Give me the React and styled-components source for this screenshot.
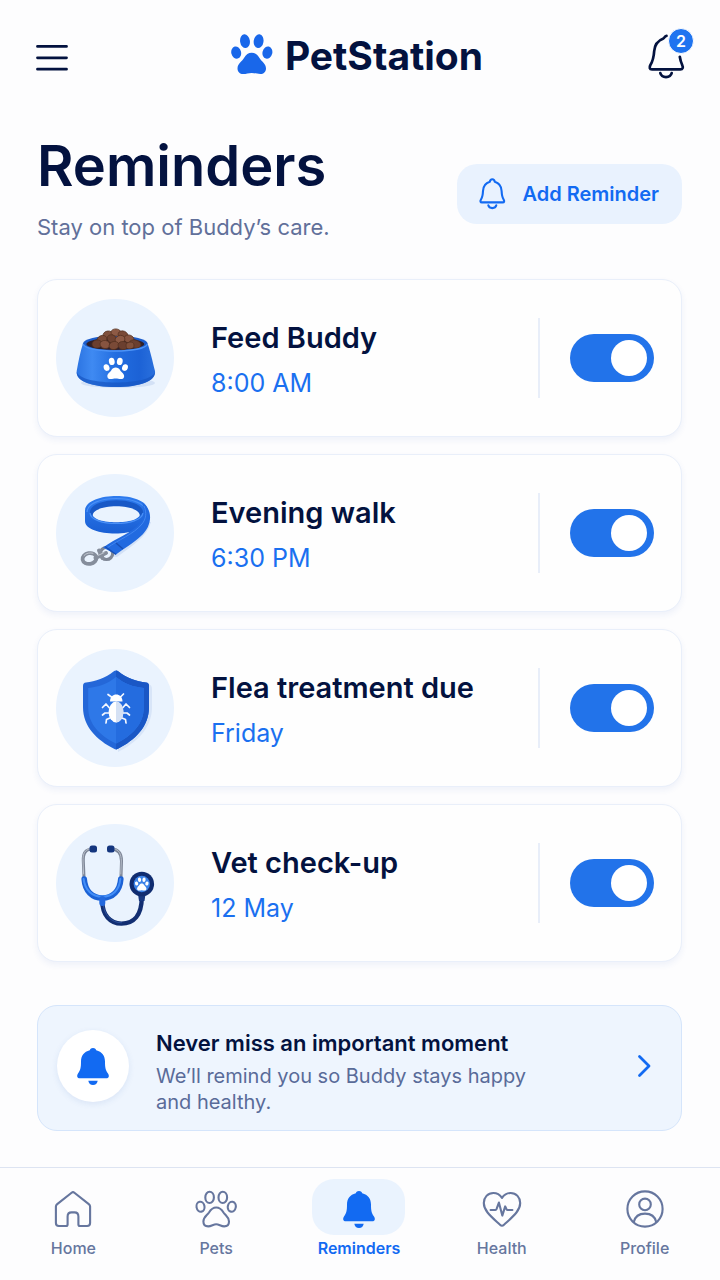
import React, { useState } from "react";
import styled, { createGlobalStyle } from "styled-components";

const GlobalStyle = createGlobalStyle`
  * {
    box-sizing: border-box;
  }
  body {
    margin: 0;
    background: #fdfdfe;
    color: #03123f;
    font-family: Inter, "Liberation Sans", sans-serif;
  }
  button {
    font: inherit;
    border: 0;
    padding: 0;
    background: none;
    cursor: pointer;
  }
  h1, h2, p, ul {
    margin: 0;
    padding: 0;
  }
  svg {
    display: block;
    flex: none;
  }
`;

const Page = styled.div`
  display: flex;
  flex-direction: column;
  min-height: 100vh;
`;

const Topbar = styled.header`
  display: flex;
  align-items: center;
  justify-content: space-between;
  height: 112px;
  padding: 0 24px 0 36px;
`;

const IconButton = styled.button`
  position: relative;
  display: flex;
`;

const Badge = styled.span`
  position: absolute;
  top: 0;
  right: 2px;
  width: 26px;
  height: 26px;
  border-radius: 50%;
  border: 1px solid #fdfdfe;
  background: #1f74f0;
  color: #fff;
  font-size: 16px;
  font-weight: 600;
  line-height: 24px;
  text-align: center;
`;

const Logo = styled.a`
  display: flex;
  align-items: center;
  gap: 12px;
  color: #03123f;
  font-size: 39px;
  font-weight: 700;
  line-height: 48px;
  text-decoration: none;

  svg {
    margin-bottom: 4px;
  }
`;

const Main = styled.main`
  padding: 22px 38px 36px 37px;
`;

const TitleRow = styled.div`
  display: flex;
  align-items: flex-start;
  justify-content: space-between;
  margin-bottom: 37px;
`;

const Title = styled.h1`
  font-size: 56px;
  font-weight: 600;
  line-height: 64px;
`;

const Subtitle = styled.p`
  margin-top: 14px;
  color: #61709a;
  font-size: 22px;
  line-height: 30px;
`;

const AddButton = styled.button`
  display: flex;
  align-items: center;
  gap: 16px;
  height: 60px;
  margin-top: 30px;
  && {
    padding: 0 23px 0 22px;
    background: #e9f2fe;
  }
  border-radius: 20px;
  color: #126af2;
  font-size: 20px;
  font-weight: 600;
  white-space: nowrap;
`;

const List = styled.ul`
  display: flex;
  flex-direction: column;
  gap: 17px;
  list-style: none;
`;

const Card = styled.li`
  display: flex;
  align-items: center;
  height: 158px;
  padding: 0 27px 0 18px;
  border: 1px solid #e9effa;
  border-radius: 20px;
  background: #fefefe;
  box-shadow: 0 3px 6px rgba(40, 90, 180, 0.07);
`;

const Picture = styled.div`
  width: 118px;
  height: 118px;
  margin-right: 37px;
  border-radius: 50%;
  background: #eaf3fe;
`;

const CardText = styled.label`
  flex: 1;
  padding-top: 5px;
  cursor: pointer;
`;

const CardTitle = styled.span`
  display: block;
  font-size: 29px;
  font-weight: 600;
  line-height: 40px;
`;

const CardTime = styled.span`
  display: block;
  margin-top: 5px;
  color: #1a70f0;
  font-size: 25px;
  line-height: 40px;
`;

const SwitchBox = styled.div`
  display: flex;
  align-items: center;
  height: 80px;
  padding-left: 30px;
  border-left: 2px solid #e8eef9;
`;

const Switch = styled.input`
  appearance: none;
  width: 84px;
  height: 48px;
  margin: 0;
  padding: 6px;
  border-radius: 24px;
  background: ${(props) => (props.checked ? "#2273ea" : "#c5cfe2")};
  cursor: pointer;

  &::before {
    content: "";
    display: block;
    width: 36px;
    height: 36px;
    margin-left: ${(props) => (props.checked ? "35px" : "0")};
    border-radius: 50%;
    background: #fff;
  }
`;

const Banner = styled.button`
  display: flex;
  align-items: center;
  width: 100%;
  margin-top: 43px;
  && {
    padding: 24px 30px 15px 19px;
    border: 1px solid #d5e5fb;
    background: #eef5fe;
  }
  border-radius: 20px;
  text-align: left;
`;

const BannerIcon = styled.span`
  display: flex;
  align-items: center;
  justify-content: center;
  width: 72px;
  height: 72px;
  margin: 0 27px 13px 0;
  border-radius: 50%;
  background: #fff;
  box-shadow: 0 2px 6px rgba(40, 90, 180, 0.1);
`;

const BannerText = styled.span`
  flex: 1;
  color: #596b99;
  font-size: 20px;
  line-height: 26px;
`;

const BannerTitle = styled.strong`
  display: block;
  margin-bottom: 7px;
  color: #03123f;
  font-size: 22px;
  font-weight: 600;
`;

const BannerCopy = styled.span`
  display: block;
  max-width: 380px;
`;

const BannerArrow = styled.span`
  margin-bottom: 14px;
`;

const Nav = styled.nav`
  display: grid;
  grid-template-columns: repeat(5, 1fr);
  height: 113px;
  margin-top: auto;
  padding: 11px 4px 0 2px;
  border-top: 1px solid #dde4f2;
`;

const NavItem = styled.a`
  display: flex;
  flex-direction: column;
  align-items: center;
  gap: 3px;
  color: ${(props) => (props.$active ? "#126af2" : "#66769e")};
  font-size: 16px;
  font-weight: ${(props) => (props.$active ? 600 : 500)};
  line-height: 20px;
  text-decoration: none;
`;

const NavIcon = styled.span`
  display: flex;
  align-items: center;
  justify-content: center;
  width: 93px;
  height: 56px;
  padding-top: 4px;
  border-radius: 22px;
  background: ${(props) => (props.$active ? "#eaf3fe" : "transparent")};
`;

const PAW_PAD =
  "M20.7 18.7C24 18.7 26.5 20.5 28.5 24C30.5 27.5 35 29.5 35 34.5C35 38 32.5 40 29.5 40C26 40 24 38.9 20.7 38.9C17.4 38.9 15.4 40 12 40C9 40 6.5 38 6.5 34.5C6.5 29.5 11 27.5 13 24C15 20.5 17.4 18.7 20.7 18.7Z";

const PawShape = () => (
  <>
    <ellipse cx="5.2" cy="18.6" rx="4.9" ry="6.2" transform="rotate(-14 5.2 18.6)" />
    <ellipse cx="14" cy="7.2" rx="4.9" ry="6.9" transform="rotate(-8 14 7.2)" />
    <ellipse cx="27.6" cy="7.2" rx="4.9" ry="6.9" transform="rotate(8 27.6 7.2)" />
    <ellipse cx="36.4" cy="18.6" rx="4.9" ry="6.2" transform="rotate(14 36.4 18.6)" />
    <path d={PAW_PAD} />
  </>
);

const Paw = () => (
  <svg width="42" height="40" viewBox="0 0 42 40" fill="#1967ea">
    <PawShape />
  </svg>
);

const MenuIcon = () => (
  <svg width="32" height="32" viewBox="0 0 32 32" stroke="#03123f" strokeWidth="2.8" strokeLinecap="round">
    <path d="M1.5 6.4H30.5M1.5 17.8H30.5M1.5 29.2H30.5" />
  </svg>
);

const AlertBell = () => (
  <svg width="50" height="56" viewBox="0 0 50 56" fill="none" stroke="#03123f" strokeWidth="2.7" strokeLinecap="round" strokeLinejoin="round">
    <path d="M20.5 7.8C18.4 8 18.6 10 17.4 10.4C11.5 12.7 8.6 17 8.2 23C7.8 29 7.4 32.2 4.4 37C3.1 39.3 3.5 41.4 6 41.4H34.3C36.9 41.4 37.3 39.4 36.2 37C34.8 34 34.2 31.5 33.8 28.8" />
    <path d="M14.3 45C15.6 50.4 24.4 50.4 25.7 45" />
  </svg>
);

const BellOutline = () => (
  <svg width="27" height="32" viewBox="0 0 27 32" fill="none" stroke="#126af2" strokeWidth="2.1" strokeLinejoin="round" strokeLinecap="round">
    <path d="M13.3 1.2C11.7 1.2 11 2.2 10.8 3.8C6 5.2 4.2 9 4 13C3.8 17 3.6 19 2 21.5C1 23.2 1.3 24.4 3 24.4H23.6C25.3 24.4 25.6 23.2 24.6 21.5C23 19 22.8 17 22.6 13C22.4 9 20.6 5.2 15.8 3.8C15.6 2.2 14.9 1.2 13.3 1.2Z" />
    <path d="M9.3 27.3C10.2 31 16.4 31 17.3 27.3" />
  </svg>
);

const BellSolid = () => (
  <svg width="32" height="37" viewBox="0 0 32 37" fill="#126af2">
    <path d="M16 0C14 0 13 1 12.8 2.3C7 3.7 4 8 4 13.5C4 19.5 3.5 22 1 25.5C-.7 28.2 .3 30.3 3 30.3H29C31.7 30.3 32.7 28.2 31 25.5C28.5 22 28 19.5 28 13.5C28 8 25 3.7 19.2 2.3C19 1 18 0 16 0Z" />
    <path d="M11.3 32.7H20.7C20.3 35.5 18.5 37 16 37C13.5 37 11.7 35.5 11.3 32.7Z" />
  </svg>
);

const Chevron = () => (
  <svg width="14" height="24" viewBox="0 0 14 24" fill="none" stroke="#126af2" strokeWidth="2.8" strokeLinecap="round" strokeLinejoin="round">
    <path d="M2.5 2.5L12 12L2.5 21.5" />
  </svg>
);

const LineIcon = styled.svg.attrs({ width: 42, height: 38, viewBox: "0 0 42 38" })`
  fill: none;
  stroke: #66769e;
  stroke-width: 2.1px;
  stroke-linecap: round;
  stroke-linejoin: round;
`;

const HomeIcon = () => (
  <LineIcon>
    <path d="M19.6 2.7L5.2 14.1C4.3 14.8 3.9 15.5 3.9 16.6V33C3.9 35 4.9 36 6.9 36H14C15 36 15.6 35.5 15.6 34.5V26.5C15.6 23.8 17.1 22.4 19.5 22.4H22.500C24.9 22.4 26.4 23.8 26.4 26.5V34.5C26.4 35.5 27 36 28 36H35.1C37.1 36 38.1 35 38.1 33V16.6C38.1 15.5 37.7 14.8 36.8 14.1L22.4 2.7C21.4 1.9 20.6 1.9 19.6 2.7Z" />
  </LineIcon>
);

const PawLineIcon = () => (
  <LineIcon>
    <ellipse cx="5.5" cy="16.7" rx="4" ry="5" transform="rotate(-10 5.5 16.7)" />
    <ellipse cx="14.6" cy="7.4" rx="4.3" ry="5.6" />
    <ellipse cx="27.8" cy="7.4" rx="4.3" ry="5.6" />
    <ellipse cx="36.8" cy="16.7" rx="4" ry="5" transform="rotate(10 36.8 16.7)" />
    <path d="M21.2 17.5C25 17.5 27 20 28.5 22.5C30.5 25.5 34 27 34 31.5C34 34.5 32 36.4 29.2 36.4C26 36.4 24 34.3 21.2 34.3C18.4 34.3 16.4 36.4 13.2 36.4C10.4 36.4 8.4 34.5 8.4 31.5C8.4 27 12 25.5 14 22.5C15.5 20 17.4 17.5 21.2 17.5Z" />
  </LineIcon>
);

const HeartIcon = () => (
  <LineIcon>
    <path d="M21 7.8C18.8 4.6 15.8 3 12.4 3C6.8 3 2.8 7.4 2.8 13C2.8 20.8 10 26.4 19 34.8C20.4 36.1 21.6 36.1 23 34.8C32 26.4 39.2 20.8 39.2 13C39.2 7.4 35.2 3 29.6 3C26.2 3 23.2 4.6 21 7.8Z" />
    <path d="M9.6 20H14.4C15 20 15.3 19.7 15.5 19.2L17.9 12.6L21.3 25.6L24.2 16.4L25.6 19.4C25.8 19.8 26.1 20 26.6 20H31.4" />
  </LineIcon>
);

const ProfileIcon = () => (
  <LineIcon>
    <circle cx="21" cy="19" r="17.6" />
    <circle cx="21" cy="14.4" r="5.8" />
    <path d="M9.8 32C11 26.6 15.4 23.6 21 23.6S31 26.6 32.2 32" />
  </LineIcon>
);

// x, y, rx, ry, rotation, colour of each piece of kibble
const KIBBLE = [
  [52, 36, 5, 4, -10, "#80503c"],
  [60, 33.5, 5, 3.6, 5, "#8d5a45"],
  [67, 36, 5, 4, 20, "#7a4a37"],
  [46, 40.5, 5, 4, -20, "#7a4a37"],
  [73, 40, 5, 4, 15, "#875440"],
  [41, 45, 5, 4, -10, "#6b3f2f"],
  [79, 45, 6, 4, 15, "#6b3f2f"],
  [56, 40, 5, 4, 30, "#6f4231"],
  [64, 40.5, 5, 4, -20, "#8d5a45"],
  [49, 45.5, 5, 4, 10, "#875440"],
  [58, 46.5, 5, 4, -15, "#7a4a37"],
  [67, 46.5, 5, 4, 10, "#6b3f2f"],
  [74, 46.5, 4, 3.4, -10, "#80503c"],
];

const Bowl = () => (
  <svg width="118" height="118" viewBox="0 0 118 118">
    <defs>
      <linearGradient id="bowl" x1="0" x2="1">
        <stop offset="0" stopColor="#2c74e2" />
        <stop offset=".2" stopColor="#3f8af2" />
        <stop offset=".5" stopColor="#226de0" />
        <stop offset=".8" stopColor="#1c62d6" />
        <stop offset="1" stopColor="#2a70dd" />
      </linearGradient>
    </defs>
    <ellipse cx="62" cy="84" rx="37" ry="5" fill="#d3e1f6" />
    <ellipse cx="59.3" cy="44.5" rx="32.3" ry="7.8" fill="#1c5dcc" />
    <ellipse cx="59.3" cy="45" rx="29" ry="6" fill="#30202a" />
    {KIBBLE.map(([x, y, rx, ry, turn, color]) => (
      <ellipse key={`${x}-${y}`} cx={x} cy={y} rx={rx} ry={ry} fill={color} stroke="#54301f" strokeWidth=".7" transform={`rotate(${turn} ${x} ${y})`} />
    ))}
    <path d="M27 44.5C28.5 54.5 90 54.5 91.6 44.5C94 51 96.5 62 99 72C100.5 82 84 88 59.8 88S19 82 20.7 72C22.5 62 24.5 52 27 44.5Z" fill="url(#bowl)" />
    <path d="M20.8 73C25 87 95 87 98.9 73C99.5 82 84 88 59.8 88S20 82 20.8 73Z" fill="#1756c2" opacity=".7" />
    <path d="M27.2 45C29.5 54.4 89 54.4 91.4 45" fill="none" stroke="#4c93f6" strokeWidth="1.4" />
    <g transform="translate(47.5 58.5) scale(.59 .54)" fill="#fff">
      <PawShape />
    </g>
  </svg>
);

const Leash = () => (
  <svg width="118" height="118" viewBox="0 0 118 118">
    <defs>
      <linearGradient id="strap" x1="0" y1="0" x2="0" y2="1">
        <stop offset="0" stopColor="#2e7bee" />
        <stop offset="1" stopColor="#1a5fd4" />
      </linearGradient>
    </defs>
    <path d="M95 48C91 63 78 70 61 83L54 82C70 70 84 61 91 48Z" fill="#d3e1f6" />
    <ellipse cx="50.5" cy="79.5" rx="6.2" ry="6" fill="none" stroke="#7f8796" strokeWidth="3.2" />
    <path d="M29 37C29 17 92 17 92 37V45C92 64 29 64 29 47Z M36.5 40C36.5 51 84 51 84 40S36.500 29 36.5 40Z" fill="url(#strap)" fillRule="evenodd" />
    <path d="M34 38.5C34 22 87 22 87 38.5L84 42C84 29 36.5 29 36.5 42Z" fill="#1858c6" />
    <path d="M31 38C32 20 88 20 91 38" fill="none" stroke="#4a90f7" strokeWidth="1.2" />
    <path d="M34 39C35 53 85 53 87 39" fill="none" stroke="#4a90f7" strokeWidth="1.2" />
    <path d="M86 29C92.5 32 94.5 39 94 45C92.5 61 77 68 60 80.5L47 73.5C60 64 76 59 84 49C89 43 89 35 86 29Z" fill="#226ae0" />
    <path d="M88 32C91 39 90 45 86 50C78 60 62 66 51 74" fill="none" stroke="#4186f0" strokeWidth="1" />
    <path d="M60 69L67 75" stroke="#174fb5" strokeWidth="1.4" />
    <path d="M49 72.5L60 80.5" stroke="#174fb5" strokeWidth="1.4" />
    <ellipse cx="33.5" cy="84.5" rx="7" ry="5.4" fill="none" stroke="#858d9b" strokeWidth="3.8" transform="rotate(-10 33.5 84.5)" />
    <path d="M39.500 84L50 79M43 76.500L46.500 84" stroke="#858d9b" strokeWidth="4" strokeLinecap="round" />
    <path d="M28 81.500C30 79 34 78.500 37 79.200M42 81.500L48 78.600" fill="none" stroke="#c3c8d1" strokeWidth="1" strokeLinecap="round" />
  </svg>
);

const Shield = () => (
  <svg width="118" height="118" viewBox="0 0 118 118">
    <path d="M62 24C70 31 82 35 93 35.5Q96 36 96 40V60C95 80 80 94 62 103Z" fill="#d8e5f8" />
    <path d="M57.5 22.6Q60 20.4 62.5 22.6C70 29 81 32.8 90 33.6Q93 34 93 37V58C93 78 79 91 62 99.8Q60 101 58 99.8C41 91 27 78 27 58V37Q27 34 30 33.6C39 32.8 50 29 57.5 22.6Z" fill="#2467d8" />
    <path d="M60 21.5Q61.3 21.5 62.5 22.6C70 29 81 32.8 90 33.6Q93 34 93 37V58C93 78 79 91 62 99.8L60 100.5Z" fill="#1a57c5" />
    <path d="M60 28C68 34.6 78 38.2 87.8 39V58C87.8 75.5 76 86.5 60 94.6C44 86.5 32.2 75.5 32.2 58V39C42 38.2 52 34.6 60 28Z" fill="#2e78e8" />
    <path d="M60 28C68 34.6 78 38.2 87.8 39V58C87.8 75.5 76 86.5 60 94.6Z" fill="#246cdf" />
    <path
      d="M55.5 48L52 45.5M64.5 48L67.5 45M53 58.5L50 55L46.5 58.5M67 58.5L70 55L73.5 58.5M53 64H49L46.5 66M67 64H71L73.5 66M54 69L50.5 70.5L50 74M66 69L69.5 70.5L70 74"
      fill="none"
      stroke="#f4f8ff"
      strokeWidth="1.7"
      strokeLinecap="round"
      strokeLinejoin="round"
    />
    <path d="M54 52.500C54 43 66.500 43 66.500 52.500Z" fill="#fff" />
    <ellipse cx="60" cy="63" rx="7.4" ry="10.4" fill="#fff" />
    <path d="M60 52.6C69.8 52.6 69.8 73.4 60 73.4Z" fill="#d5e1f4" />
  </svg>
);

const Stethoscope = () => (
  <svg width="118" height="118" viewBox="0 0 118 118" fill="none" strokeLinecap="round">
    <path d="M37 25C29.500 25 27 29 27.300 37L28 53M55 25C62.500 25 65.500 29 65.500 37L65 53" stroke="#7d8697" strokeWidth="3" />
    <path d="M34 24.8C29 25.800 26.800 29 27 37L27.600 50M58 24.8C63 25.800 65.300 30 65.300 37L64.800 50" stroke="#b9c0cc" strokeWidth="1" />
    <path d="M46.3 77C46.3 91 54 99.6 65.5 99.6C78 99.6 85.5 91 85.8 74" stroke="#122e72" strokeWidth="4.4" />
    <path d="M47 79C48 91 55 98.8 65.5 98.8" stroke="#2b509c" strokeWidth="1" />
    <path d="M28.2 55C29 67 36 74 46.3 74S64 67 64.8 55" stroke="#1c62d5" strokeWidth="5.6" />
    <path d="M27.6 55C29 66 36 72.6 46.3 72.6S63.500 66 64.3 55" stroke="#438ef7" strokeWidth="2" />
    <path d="M46.3 75V79" stroke="#2369de" strokeWidth="6" />
    <rect x="33.5" y="21.5" width="7.5" height="7" rx="2.5" fill="#14357e" />
    <rect x="51" y="21.5" width="7.5" height="7" rx="2.5" fill="#14357e" />
    <path d="M82 70H89.500L88.500 77H83Z" fill="#17377f" />
    <circle cx="85.8" cy="60" r="12.3" fill="#102c70" />
    <circle cx="85.8" cy="60" r="8.2" fill="#3c83e8" />
    <g transform="translate(78.9 53.4) scale(.33)" fill="#fff">
      <PawShape />
    </g>
  </svg>
);

const REMINDERS = [
  { id: "feed", title: "Feed Buddy", time: "8:00 AM", Art: Bowl },
  { id: "walk", title: "Evening walk", time: "6:30 PM", Art: Leash },
  { id: "flea", title: "Flea treatment due", time: "Friday", Art: Shield },
  { id: "vet", title: "Vet check-up", time: "12 May", Art: Stethoscope },
];

const TABS = [
  { name: "Home", Icon: HomeIcon },
  { name: "Pets", Icon: PawLineIcon },
  { name: "Reminders", Icon: BellSolid, active: true },
  { name: "Health", Icon: HeartIcon },
  { name: "Profile", Icon: ProfileIcon },
];

const Reminder = ({ id, title, time, Art }) => {
  const [on, setOn] = useState(true);

  return (
    <Card>
      <Picture>
        <Art />
      </Picture>
      <CardText htmlFor={id}>
        <CardTitle>{title}</CardTitle>
        <CardTime>{time}</CardTime>
      </CardText>
      <SwitchBox>
        <Switch id={id} type="checkbox" checked={on} onChange={() => setOn(!on)} />
      </SwitchBox>
    </Card>
  );
};

const App = () => (
  <Page>
    <GlobalStyle />
    <Topbar>
      <IconButton aria-label="Menu">
        <MenuIcon />
      </IconButton>
      <Logo href="#">
        <Paw />
        PetStation
      </Logo>
      <IconButton aria-label="Notifications">
        <AlertBell />
        <Badge>2</Badge>
      </IconButton>
    </Topbar>
    <Main>
      <TitleRow>
        <div>
          <Title>Reminders</Title>
          <Subtitle>Stay on top of Buddy’s care.</Subtitle>
        </div>
        <AddButton>
          <BellOutline />
          Add Reminder
        </AddButton>
      </TitleRow>
      <List>
        {REMINDERS.map((item) => (
          <Reminder key={item.id} {...item} />
        ))}
      </List>
      <Banner>
        <BannerIcon>
          <BellSolid />
        </BannerIcon>
        <BannerText>
          <BannerTitle>Never miss an important moment</BannerTitle>
          <BannerCopy>We’ll remind you so Buddy stays happy and healthy.</BannerCopy>
        </BannerText>
        <BannerArrow>
          <Chevron />
        </BannerArrow>
      </Banner>
    </Main>
    <Nav>
      {TABS.map(({ name, Icon, active }) => (
        <NavItem key={name} href="#" $active={active}>
          <NavIcon $active={active}>
            <Icon />
          </NavIcon>
          {name}
        </NavItem>
      ))}
    </Nav>
  </Page>
);

export default App;
